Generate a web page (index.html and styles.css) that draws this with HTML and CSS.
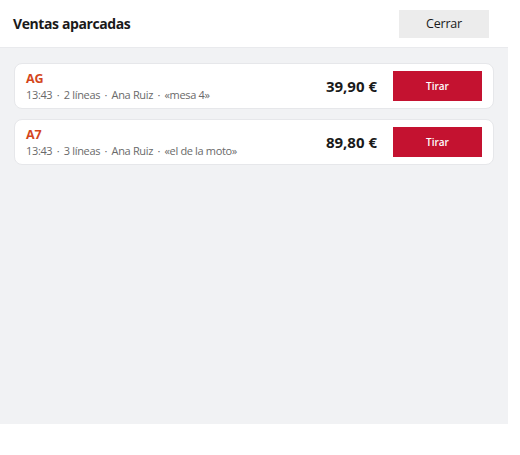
FILE: index.html
```html
<!DOCTYPE html>
<html lang="es">

<head>
    <meta charset="UTF-8">
    <meta name="viewport" content="width=device-width, initial-scale=1.0">
    <title>Ventas aparcadas</title>
    <link rel="stylesheet" href="styles.css">
</head>

<body>

    <div class="modal">
        <div class="modal-header">
            <h1>Ventas aparcadas</h1>
            <button class="btn-cerrar">Cerrar</button>
        </div>

        <div class="modal-body">
            <div class="venta">
                <div class="venta-info">
                    <div class="venta-codigo">AG</div>
                    <div class="venta-meta">13:43 <span class="sep">·</span> 2 líneas <span class="sep">·</span> Ana Ruiz <span class="sep">·</span> «mesa 4»</div>
                </div>
                <div class="venta-total">39,90 €</div>
                <button class="btn-tirar">Tirar</button>
            </div>

            <div class="venta">
                <div class="venta-info">
                    <div class="venta-codigo">A7</div>
                    <div class="venta-meta">13:43 <span class="sep">·</span> 3 líneas <span class="sep">·</span> Ana Ruiz <span class="sep">·</span> «el de la moto»</div>
                </div>
                <div class="venta-total">89,80 €</div>
                <button class="btn-tirar">Tirar</button>
            </div>
        </div>
    </div>

</body>

</html>
```

FILE: styles.css
```css
body {
    font-family: "Open Sans", "Noto Sans", sans-serif;
    margin: 0;
    padding: 0;
    background-color: white;
    color: #1a1a1a;
}

.modal {
    width: 508px;
    height: 424px;
    display: flex;
    flex-direction: column;
}

/* Cabecera */
.modal-header {
    height: 47px;
    display: flex;
    align-items: center;
    justify-content: space-between;
    padding: 0 19px 0 13px;
    background-color: white;
    border-bottom: 1px solid #e9eaed;
}

h1 {
    margin: 0;
    font-size: 14px;
    font-weight: 700;
    letter-spacing: -0.4px;
}

.btn-cerrar {
    width: 90px;
    height: 28px;
    font-family: inherit;
    font-size: 12.5px;
    letter-spacing: -0.2px;
    color: #1a1a1a;
    background-color: #ececec;
    border: none;
    cursor: pointer;
}

/* Lista de ventas */
.modal-body {
    flex-grow: 1;
    background-color: #f1f2f4;
    padding: 15px 14px;
    display: flex;
    flex-direction: column;
    gap: 10px;
}

.venta {
    height: 46px;
    display: flex;
    align-items: center;
    padding: 0 11px;
    background-color: white;
    border: 1px solid #e6e7ea;
    border-radius: 8px;
    box-sizing: border-box;
}

.venta-info {
    flex-grow: 1;
}

.venta-codigo {
    font-size: 12.5px;
    font-weight: 700;
    color: #d4461c;
    line-height: 16px;
}

.venta-meta {
    font-size: 11px;
    letter-spacing: -0.35px;
    color: #6a6a6a;
    line-height: 15px;
}

.sep {
    margin: 0 2px;
}

.venta-total {
    font-size: 15px;
    font-weight: 700;
    margin-right: 16px;
}

.btn-tirar {
    width: 89px;
    height: 30px;
    font-family: inherit;
    font-size: 10px;
    font-weight: 600;
    color: white;
    background-color: #c41230;
    border: none;
    cursor: pointer;
}
```
